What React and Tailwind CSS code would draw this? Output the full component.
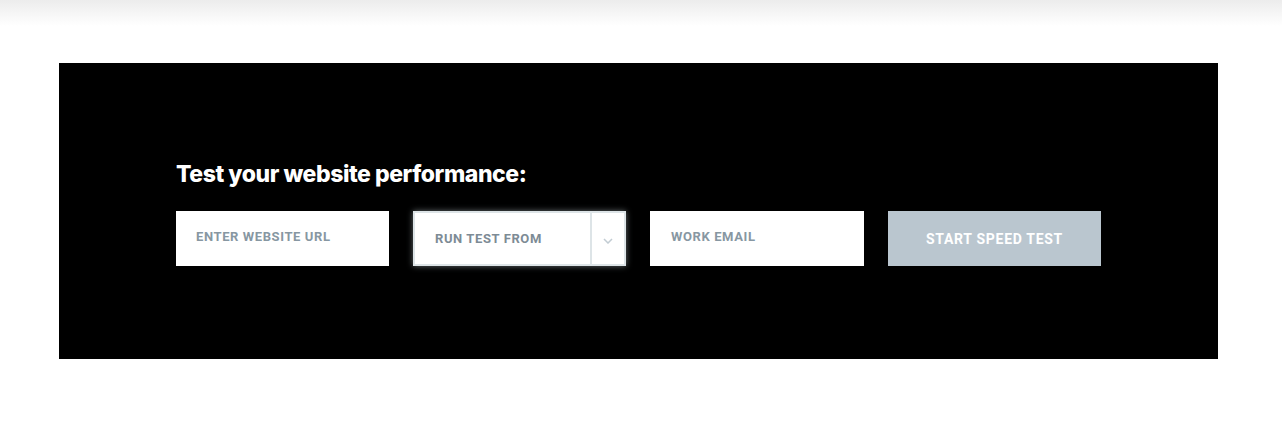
import React from 'react';

export default function App() {
  return (
    <div className="relative w-[1282px] h-[426px] bg-white overflow-hidden font-['Roboto',sans-serif]">
      {/* top header shadow */}
      <div className="h-[26px] bg-gradient-to-b from-[#ececec] to-white" />

      <div className="pl-[59px] pt-[37px]">
        <div className="w-[1159px] h-[296px] bg-black pl-[117px] pt-[97px]">
          <h2 className="text-[23px] leading-[28px] font-extrabold text-white tracking-[-0.45px] font-['Inter',sans-serif]">
            Test your website performance:
          </h2>

          <form className="flex gap-6 mt-[23px]" onSubmit={(e) => e.preventDefault()}>
            {/* URL */}
            <div className="w-[213px] h-[55px] bg-white flex items-center pl-5 pb-[3px]">
              <span className="text-[13px] font-bold uppercase tracking-[0.6px] text-[#8797a2]">
                Enter website URL
              </span>
            </div>

            {/* Location select */}
            <div className="w-[213px] h-[55px] bg-white border-2 border-[#dde4e7] shadow-[0_0_6px_rgba(220,235,240,0.45)] flex">
              <div className="flex-1 flex items-center pl-5 pt-[1px]">
                <span className="text-[13px] font-bold uppercase tracking-[0.6px] text-[#7d8b95]">
                  Run test from
                </span>
              </div>
              <div className="w-[34px] border-l-2 border-[#dde4e7] flex items-center justify-center pt-1">
                <svg width="10" height="6" viewBox="0 0 10 6" fill="none">
                  <path d="M1 1l4 4 4-4" stroke="#c2ccd3" strokeWidth="1.5" />
                </svg>
              </div>
            </div>

            {/* Email */}
            <div className="w-[214px] h-[55px] bg-white flex items-center pl-[21px] pb-[3px]">
              <span className="text-[13px] font-bold uppercase tracking-[0.6px] text-[#8797a2]">
                Work email
              </span>
            </div>

            {/* Submit */}
            <button
              type="submit"
              className="w-[213px] h-[55px] bg-[#bac6cf] text-white text-[14px] font-bold uppercase tracking-[0.7px] flex items-center justify-center pt-[2px]"
            >
              Start speed test
            </button>
          </form>
        </div>
      </div>
    </div>
  );
}
